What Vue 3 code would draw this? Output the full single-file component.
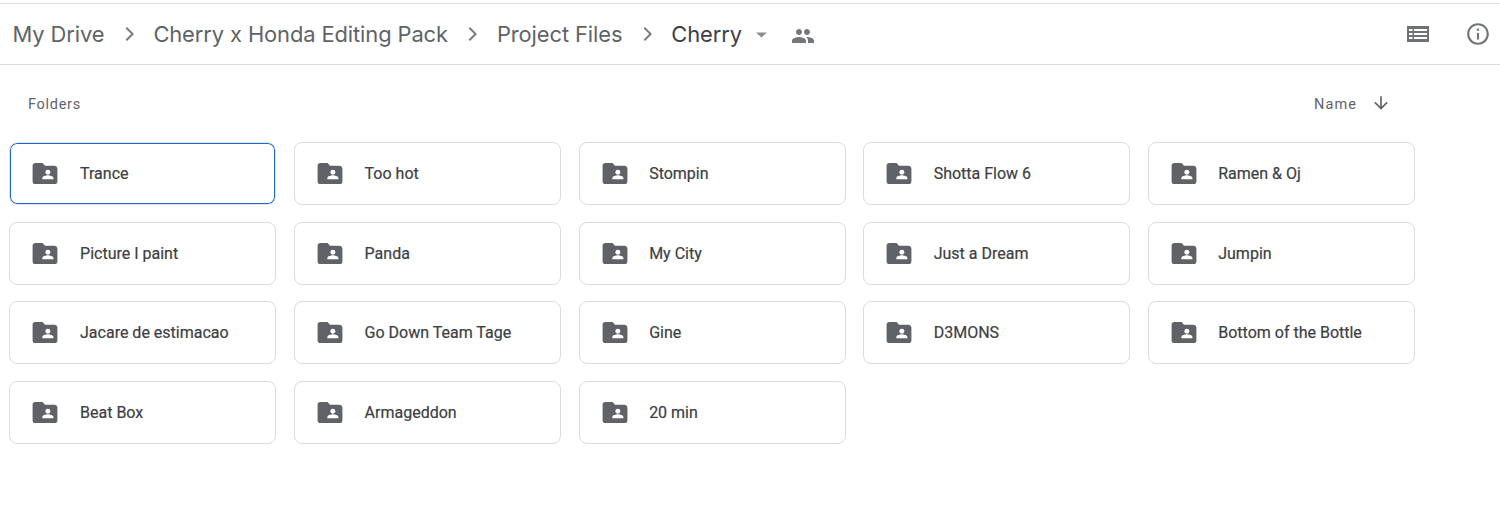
<script setup>
const folders = ['Trance','Too hot','Stompin','Shotta Flow 6','Ramen & Oj','Picture I paint','Panda','My City','Just a Dream','Jumpin','Jacare de estimacao','Go Down Team Tage','Gine','D3MONS','Bottom of the Bottle','Beat Box','Armageddon','20 min']
const crumbs = ['My Drive','Cherry x Honda Editing Pack','Project Files']
</script>

<template>
  <div class="page">
    <header class="bar">
      <template v-for="c in crumbs" :key="c">
        <span class="crumb">{{ c }}</span>
        <svg class="chev" width="24" height="24" viewBox="0 0 24 24"><path d="M8.6 6.4 10 5l7 7-7 7-1.4-1.4 5.6-5.6z" fill="#777a7e"/></svg>
      </template>
      <span class="crumb current">Cherry</span>
      <svg class="caret" width="13" height="6" viewBox="0 0 14 7"><path d="M0.5 0.5h13L7 6.5z" fill="#8b8e92"/></svg>
      <svg class="people" width="24" height="24" viewBox="0 0 24 24"><path d="M16 11c1.66 0 2.99-1.34 2.99-3S17.66 5 16 5s-3 1.34-3 3 1.34 3 3 3zm-8 0c1.66 0 2.99-1.34 2.99-3S9.66 5 8 5 5 6.34 5 8s1.34 3 3 3zm0 2c-2.33 0-7 1.17-7 3.5V19h14v-2.5C15 14.17 10.33 13 8 13zm8 0c-.29 0-.62.02-.97.05 1.16.84 1.97 1.97 1.97 3.45V19h6v-2.5c0-2.33-4.67-3.5-7-3.5z" fill="#73767a"/></svg>
      <span class="spacer"></span>
      <svg class="list" width="24" height="24" viewBox="0 0 24 24"><path d="M1 4h22v16H1z" fill="#707376"/><path d="M3 7h3.5v2H3zM8 7h13v2H8zM3 11h3.5v2H3zM8 11h13v2H8zM3 15h3.5v2H3zM8 15h13v2H8z" fill="#fff"/></svg>
      <svg class="info" width="26" height="26" viewBox="0 0 24 24"><path d="M11 7h2v2h-2zm0 4h2v6h-2zm1-9C6.48 2 2 6.48 2 12s4.48 10 10 10 10-4.48 10-10S17.52 2 12 2zm0 18c-4.41 0-8-3.59-8-8s3.59-8 8-8 8 3.59 8 8-3.59 8-8 8z" fill="#707376"/></svg>
    </header>

    <div class="heading">
      <span class="folders-label">Folders</span>
      <span class="sort">Name</span>
      <svg class="arrow" width="20" height="20" viewBox="0 0 24 24"><path d="M20 12l-1.41-1.41L13 16.17V4h-2v12.17l-5.58-5.59L4 12l8 8 8-8z" fill="#5f6368"/></svg>
    </div>

    <div class="grid">
      <div v-for="(f, i) in folders" :key="f" class="card" :class="{ selected: i === 0 }">
        <svg class="folder" width="26" height="21" viewBox="0 0 26 22">
          <path d="M3 0h7.5l2.5 2.8h10a3 3 0 0 1 3 2.7V19a3 3 0 0 1-3 3H3a3 3 0 0 1-3-3V3a3 3 0 0 1 3-3z" fill="#5f6368"/>
          <circle cx="16" cy="9.6" r="2.6" fill="#fff"/>
          <path d="M10.2 17v-1.3c0-1.9 3.9-2.9 5.8-2.9s5.8 1 5.8 2.9V17z" fill="#fff"/>
        </svg>
        <span class="name">{{ f }}</span>
      </div>
    </div>
  </div>
</template>

<style scoped>
.page {
  width: 1500px;
  height: 527px;
  background: #fff;
  overflow: hidden;
  padding-top: 3px;
  box-sizing: border-box;
  font-family: Roboto, "Liberation Sans", sans-serif;
}
.bar {
  height: 62px;
  border-top: 1px solid #dfe0e2;
  border-bottom: 1px solid #dadce0;
  box-sizing: border-box;
  display: flex;
  align-items: center;
  padding: 0 9px 0 12.5px;
}
.crumb {
  font-family: Inter, sans-serif;
  font-size: 21.9px;
  letter-spacing: -0.1px;
  color: #5f6368;
  white-space: nowrap;
}
.current { color: #3c4043; }
.chev { margin: 0 12.5px; }
.caret { margin-left: 13px; margin-top: 2px; }
.people { margin-left: 23px; margin-top: 3px; }
.spacer { flex: 1; }
.list { margin-right: 35px; margin-top: -1px; }
.heading {
  height: 77px;
  display: flex;
  align-items: center;
  padding-left: 28px;
  padding-top: 1px;
  box-sizing: border-box;
}
.folders-label {
  font-size: 14.5px;
  letter-spacing: 0.7px;
  color: #5f6368;
  font-weight: 400;
  flex: 1;
}
.sort {
  font-size: 14.5px;
  letter-spacing: 1.1px;
  font-weight: 400;
  color: #5f6368;
}
.arrow { margin: -3px 109px 0 14px; }
.grid {
  display: grid;
  grid-template-columns: repeat(5, 267px);
  grid-auto-rows: 63px;
  column-gap: 17.55px;
  row-gap: 16.6px;
  padding-left: 9.45px;
  margin-top: -1px;
  padding-top: 1px;
}
.card {
  border: 1px solid #dadce0;
  border-radius: 8px;
  box-sizing: border-box;
  display: flex;
  align-items: center;
  padding-left: 22px;
}
.card.selected {
  border-color: #e3e6ec;
  box-shadow: inset 0 0 0 1px #1a66cc;
}
.folder { flex: none; }
.name {
  margin-left: 21.6px;
  font-size: 16px;
  font-weight: 400;
  letter-spacing: 0;
  color: #3c4043;
  -webkit-text-stroke: 0.2px #3c4043;
  white-space: nowrap;
}
</style>
